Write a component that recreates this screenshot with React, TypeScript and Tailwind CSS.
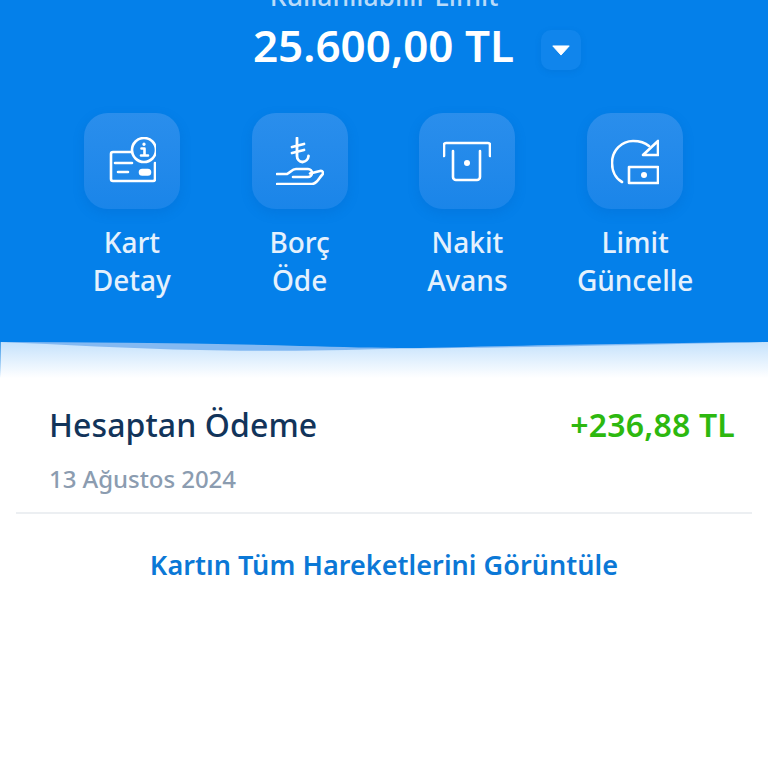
import React from 'react';

const CardInfoIcon = () => (
  <svg viewBox="0 0 48 48" className="w-12 h-12" fill="none" stroke="white" strokeWidth="2.600" strokeLinecap="round" strokeLinejoin="round">
    <path d="M24 15 H5 a2 2 0 0 0 -2 2 V42 a2 2 0 0 0 2 2 H45 a2 2 0 0 0 2 -2 V26" />
    <circle cx="36" cy="13" r="12" />
    <path d="M33.500 11.500 h3 v7 M33 18.500 h7" />
    <path d="M36 7 v.3" strokeWidth="3.200" />
    <path d="M7 26 H24 M10 35 H20" />
    <rect x="32" y="33" width="10" height="4.500" rx="2.200" fill="white" />
  </svg>
);

const HandLiraIcon = () => (
  <svg viewBox="0 0 48 48" className="w-12 h-12" fill="none" stroke="white" strokeWidth="2.600" strokeLinecap="round" strokeLinejoin="round">
    <path d="M21 1 V19 a6 6 0 0 0 5.500 6 a6.500 6.500 0 0 0 6 -6" strokeWidth="2.800" />
    <path d="M16 10 L28 7 M16 16 L28 13" strokeWidth="2.800" />
    <path d="M1 37 H11 C14 36 16 32 20 32 H32 a3.500 3.500 0 0 1 0 8 H17" />
    <path d="M34 36.500 L44 34 C47 33.500 48 36 46 38 C43 41 41 47 36 47 H1" />
  </svg>
);

const AtmIcon = () => (
  <svg viewBox="0 0 48 48" className="w-12 h-12" fill="none" stroke="white" strokeWidth="2.600" strokeLinecap="round" strokeLinejoin="round">
    <path d="M1 19 V8 a2 2 0 0 1 2 -2 H45 a2 2 0 0 1 2 2 V19" />
    <path d="M10 14 V40 a3 3 0 0 0 3 3 H34 a3 3 0 0 0 3 -3 V14" />
    <circle cx="24" cy="26" r="3" fill="white" stroke="none" />
  </svg>
);

const LimitIcon = () => (
  <svg viewBox="0 0 48 48" className="w-12 h-12" fill="none" stroke="white" strokeWidth="2.600" strokeLinecap="round" strokeLinejoin="round">
    <path d="M11 45 C4 41 1 33 1 26 C1 13 11 4 22 4 C28 4 34 5.500 38 9" />
    <path d="M47 4 V18 H32 Z" />
    <rect x="18" y="30" width="29" height="16" />
    <circle cx="33" cy="38" r="3" fill="white" stroke="none" />
  </svg>
);

const actions = [
  { lines: ['Kart', 'Detay'], icon: CardInfoIcon },
  { lines: ['Borç', 'Öde'], icon: HandLiraIcon },
  { lines: ['Nakit', 'Avans'], icon: AtmIcon },
  { lines: ['Limit', 'Güncelle'], icon: LimitIcon },
];

const App: React.FC = () => {
  return (
    <div className="h-[768px] w-[768px] overflow-hidden bg-white font-['Noto_Sans',sans-serif]">
      {/* Blue header */}
      <div className="h-[342px] overflow-hidden bg-[#0480ea]">
        <div className="-mt-[17px] text-center text-[26.500px] leading-[26px] font-medium text-[#b8dbfa]">
          Kullanılabilir Limit
        </div>
        <div className="flex items-center justify-center gap-[27px] pl-[66px] pt-[6px]">
          <span className="text-[44px] leading-[60px] font-semibold text-white">25.600,00 TL</span>
          <button className="mt-[10px] flex h-10 w-10 items-center justify-center rounded-[10px] bg-[#1085ec] shadow-[0_2px_6px_rgba(0,80,170,0.15)]">
            <svg viewBox="0 0 20 12" className="h-[11px] w-[20px]">
              <path d="M1 1 H19 L10 11 Z" fill="white" stroke="white" strokeLinejoin="round" />
            </svg>
          </button>
        </div>

        <div className="grid grid-cols-4 pl-[48px] pr-[49px] pt-[38px]">
          {actions.map((action) => {
            const Icon = action.icon;
            return (
              <div key={action.lines[0]} className="flex flex-col items-center">
                <div className="flex h-24 w-24 items-center justify-center rounded-[24px] bg-gradient-to-b from-[#2a8eec] to-[#1a85e9] shadow-[0_4px_12px_rgba(0,80,170,0.18)]">
                  <Icon />
                </div>
                <div className="pt-[14px] text-center text-[28px] leading-[38px] font-medium text-[#e4f1fd]">
                  {action.lines.map((line) => (
                    <div key={line} className="whitespace-nowrap">{line}</div>
                  ))}
                </div>
              </div>
            );
          })}
        </div>
      </div>

      {/* Wave */}
      <div className="relative h-[36px] bg-gradient-to-b from-[#c5e2fc] to-white">
        <div className="absolute inset-y-0 left-0 w-[1px] bg-gradient-to-b from-[#3f9bea] to-transparent" />
        <svg viewBox="0 0 768 12" preserveAspectRatio="none" className="block h-[12px] w-full">
          <path d="M0 0 C60 2 130 7 200 8 C250 9.500 320 9 400 6.500 C500 6 640 3 768 0 Z" fill="#84b9f2" />
          <path d="M0 0 C100 0.500 200 1 300 4 C340 5 380 6 410 6 C480 4.500 640 1 768 0 Z" fill="#0480ea" />
        </svg>
      </div>

      {/* Transaction */}
      <div className="mx-4 h-[136px] border-b-2 border-[#eceff2] pl-[34px] pr-[17px]">
        <div className="flex items-center justify-between pt-[26px]">
          <span className="-ml-[1px] text-[32px] leading-[42px] font-medium tracking-[0.1px] text-[#12345a]">Hesaptan Ödeme</span>
          <span className="text-[32px] leading-[42px] font-semibold tracking-[0.2px] text-[#2db80f]">+236,88 TL</span>
        </div>
        <div className="-ml-[1px] pt-[17px] text-[24px] leading-[32px] font-medium tracking-[-0.05px] text-[#8b9cb0]">13 Ağustos 2024</div>
      </div>

      <div className="pt-[33px] text-center text-[27px] leading-[36px] font-semibold tracking-[0.05px] text-[#0b78d6]">
        Kartın Tüm Hareketlerini Görüntüle
      </div>
    </div>
  );
};

export default App;
